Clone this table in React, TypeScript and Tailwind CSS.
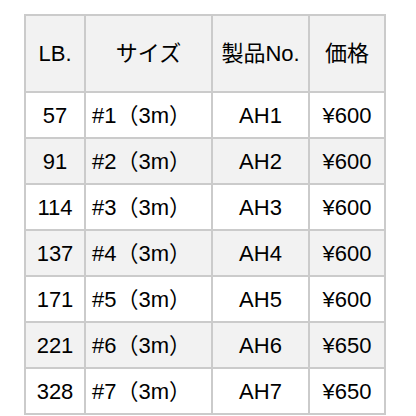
const rows = [
    { lb: "57", size: "#1（3m）", no: "AH1", price: "¥600" },
    { lb: "91", size: "#2（3m）", no: "AH2", price: "¥600" },
    { lb: "114", size: "#3（3m）", no: "AH3", price: "¥600" },
    { lb: "137", size: "#4（3m）", no: "AH4", price: "¥600" },
    { lb: "171", size: "#5（3m）", no: "AH5", price: "¥600" },
    { lb: "221", size: "#6（3m）", no: "AH6", price: "¥650" },
    { lb: "328", size: "#7（3m）", no: "AH7", price: "¥650" },
];

export default function App() {
    return (
        <div
            className="w-[416px] h-[416px] bg-white pl-[24px] pt-[14px] text-[22px] text-black"
            style={{ fontFamily: '"Liberation Sans", Arial, "Noto Sans CJK JP", sans-serif' }}
        >
            <table className="table-fixed border-collapse w-[360px]">
                <colgroup>
                    <col className="w-[60px]" />
                    <col className="w-[127px]" />
                    <col className="w-[97px]" />
                    <col className="w-[76px]" />
                </colgroup>
                <thead>
                    <tr className="h-[77px] bg-[#f2f2f2]">
                        <th className="border-2 border-[#cbcbcb] font-normal text-center">LB.</th>
                        <th className="border-2 border-[#cbcbcb] font-normal text-center">サイズ</th>
                        <th className="border-2 border-[#cbcbcb] font-normal text-center whitespace-nowrap">製品No.</th>
                        <th className="border-2 border-[#cbcbcb] font-normal text-center">価格</th>
                    </tr>
                </thead>
                <tbody>
                    {rows.map((r, i) => (
                        <tr key={r.no} className={i % 2 === 1 ? "h-[46px] bg-[#f2f2f2]" : "h-[46px] bg-white"}>
                            <td className="border-2 border-[#cbcbcb] text-center">{r.lb}</td>
                            <td className="border-2 border-[#cbcbcb] pl-[6px] whitespace-nowrap">{r.size}</td>
                            <td className="border-2 border-[#cbcbcb] text-center">{r.no}</td>
                            <td className="border-2 border-[#cbcbcb] text-center">{r.price}</td>
                        </tr>
                    ))}
                </tbody>
            </table>
        </div>
    );
}
